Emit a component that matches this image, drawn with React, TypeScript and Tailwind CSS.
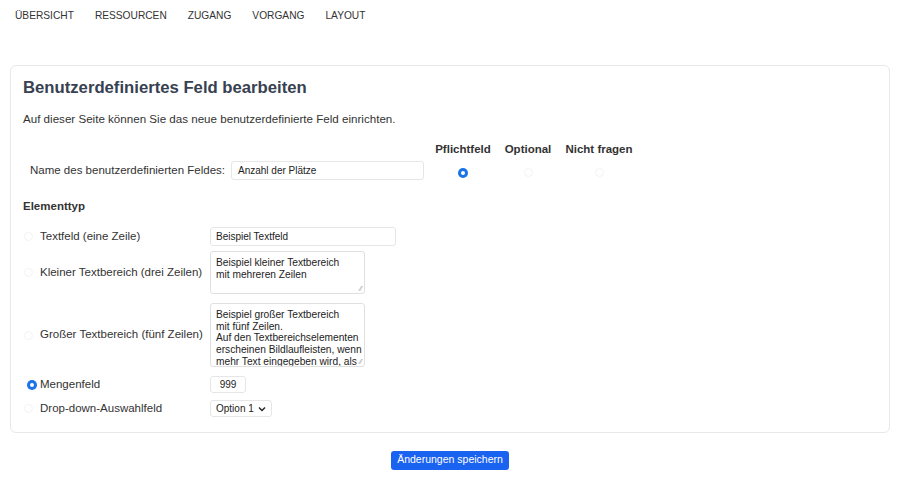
import React from 'react';

const font = { fontFamily: '"Liberation Sans", Arial, sans-serif' };

function Radio({ checked = false }: { checked?: boolean }) {
  if (checked) {
    return (
      <span className="inline-flex h-[10px] w-[10px] shrink-0 items-center justify-center rounded-full bg-[#1a73e8]">
        <span className="h-[4px] w-[4px] rounded-full bg-white" />
      </span>
    );
  }
  return <span className="inline-block h-[9px] w-[9px] shrink-0 rounded-full border border-[#f3f3f3] bg-white" />;
}

const navItems = ['Übersicht', 'Ressourcen', 'Zugang', 'Vorgang', 'Layout'];

export default function App() {
  return (
    <div className="min-h-[477px] w-[900px] bg-white text-[#333]" style={font}>
      <nav className="flex gap-[21px] px-[15px] pt-[9px] text-[10.2px] leading-[14px] uppercase text-[#333]">
        {navItems.map((item) => (
          <span key={item}>{item}</span>
        ))}
      </nav>

      <div className="mx-[10px] mt-[42px] rounded-[6px] border border-[#e8e8e8] px-[12px] pb-[14px] pt-[11px]">
        <h1 className="text-[16.7px] font-bold leading-[22px] text-[#374151]">Benutzerdefiniertes Feld bearbeiten</h1>
        <p className="mt-[13px] text-[11.6px] leading-[14px]">
          Auf dieser Seite können Sie das neue benutzerdefinierte Feld einrichten.
        </p>

        <div className="mt-[16px] flex text-[11.5px] font-bold leading-[14px]">
          <div className="w-[408px]" />
          <div className="w-[64px] text-center">Pflichtfeld</div>
          <div className="w-[66px] text-center">Optional</div>
          <div className="w-[76px] text-center">Nicht fragen</div>
        </div>

        <div className="mt-[5px] flex items-center text-[11.5px]">
          <span className="w-[208px] pl-[7px]">Name des benutzerdefinierten Feldes:</span>
          <div className="flex h-[19px] w-[193px] items-center rounded-[3px] border border-[#e6e6e6] px-[6px] text-[10px] text-[#222]">
            Anzahl der Plätze
          </div>
          <div className="w-[7px]" />
          <div className="flex w-[64px] justify-center pt-[4px]">
            <Radio checked />
          </div>
          <div className="flex w-[66px] justify-center pt-[4px]">
            <Radio />
          </div>
          <div className="flex w-[76px] justify-center pt-[4px]">
            <Radio />
          </div>
        </div>

        <h2 className="mt-[19px] text-[11.5px] font-bold leading-[14px]">Elementtyp</h2>

        <div className="mt-[14px] flex flex-col text-[11.5px]">
          <div className="flex items-center">
            <span className="flex w-[187px] items-center gap-[7px] pl-[1px]">
              <Radio />
              Textfeld (eine Zeile)
            </span>
            <div className="flex h-[19px] w-[186px] items-center rounded-[3px] border border-[#e6e6e6] px-[5px] text-[10px] text-[#222]">
              Beispiel Textfeld
            </div>
          </div>

          <div className="mt-[5px] flex items-center">
            <span className="flex w-[187px] items-center gap-[7px] pl-[1px]">
              <Radio />
              Kleiner Textbereich (drei Zeilen)
            </span>
            <div className="relative h-[43px] w-[155px] rounded-[3px] border border-[#e0e0e0] px-[5px] pt-[5px] text-[10.2px] leading-[11.7px] text-[#222]">
              Beispiel kleiner Textbereich
              <br />
              mit mehreren Zeilen
              <span className="absolute bottom-[1px] right-[2px] text-[7px] leading-none text-[#999]">⁄⁄</span>
            </div>
          </div>

          <div className="mt-[9px] flex items-center">
            <span className="flex w-[187px] items-center gap-[7px] pl-[1px]">
              <Radio />
              Großer Textbereich (fünf Zeilen)
            </span>
            <div className="relative h-[64px] w-[155px] overflow-hidden rounded-[3px] border border-[#e0e0e0] pl-[5px] pr-0 pt-[5px] text-[10.2px] leading-[11.7px] text-[#222]">
              Beispiel großer Textbereich
              <br />
              mit fünf Zeilen.
              <br />
              Auf den Textbereichselementen erscheinen Bildlaufleisten, wenn mehr Text eingegeben wird, als in diesen
              Bereich passt. Dieser
              <span className="absolute bottom-[1px] right-[2px] bg-white text-[7px] leading-none text-[#999]">⁄⁄</span>
            </div>
          </div>

          <div className="mt-[9px] flex items-center">
            <span className="flex w-[187px] items-center gap-[3px] pl-[4px]">
              <Radio checked />
              Mengenfeld
            </span>
            <div className="flex h-[17px] w-[36px] items-center justify-center rounded-[3px] border border-[#e6e6e6] text-[10px] text-[#222]">
              999
            </div>
          </div>

          <div className="mt-[7px] flex items-center">
            <span className="flex w-[187px] items-center gap-[7px] pl-[1px]">
              <Radio />
              Drop-down-Auswahlfeld
            </span>
            <div className="flex h-[17px] w-[62px] items-center justify-between rounded-[3px] border border-[#e6e6e6] px-[5px] text-[10px] text-[#222]">
              Option 1
              <svg width="8" height="6" viewBox="0 0 8 6" fill="none">
                <path d="M1 1.5 4 4.5 7 1.5" stroke="#222" strokeWidth="1.4" />
              </svg>
            </div>
          </div>
        </div>
      </div>

      <div className="mt-[18px] flex justify-center">
        <button className="h-[19px] rounded-[3px] bg-[#1a62f0] px-[6px] text-[10.5px] text-white">
          Änderungen speichern
        </button>
      </div>
    </div>
  );
}
